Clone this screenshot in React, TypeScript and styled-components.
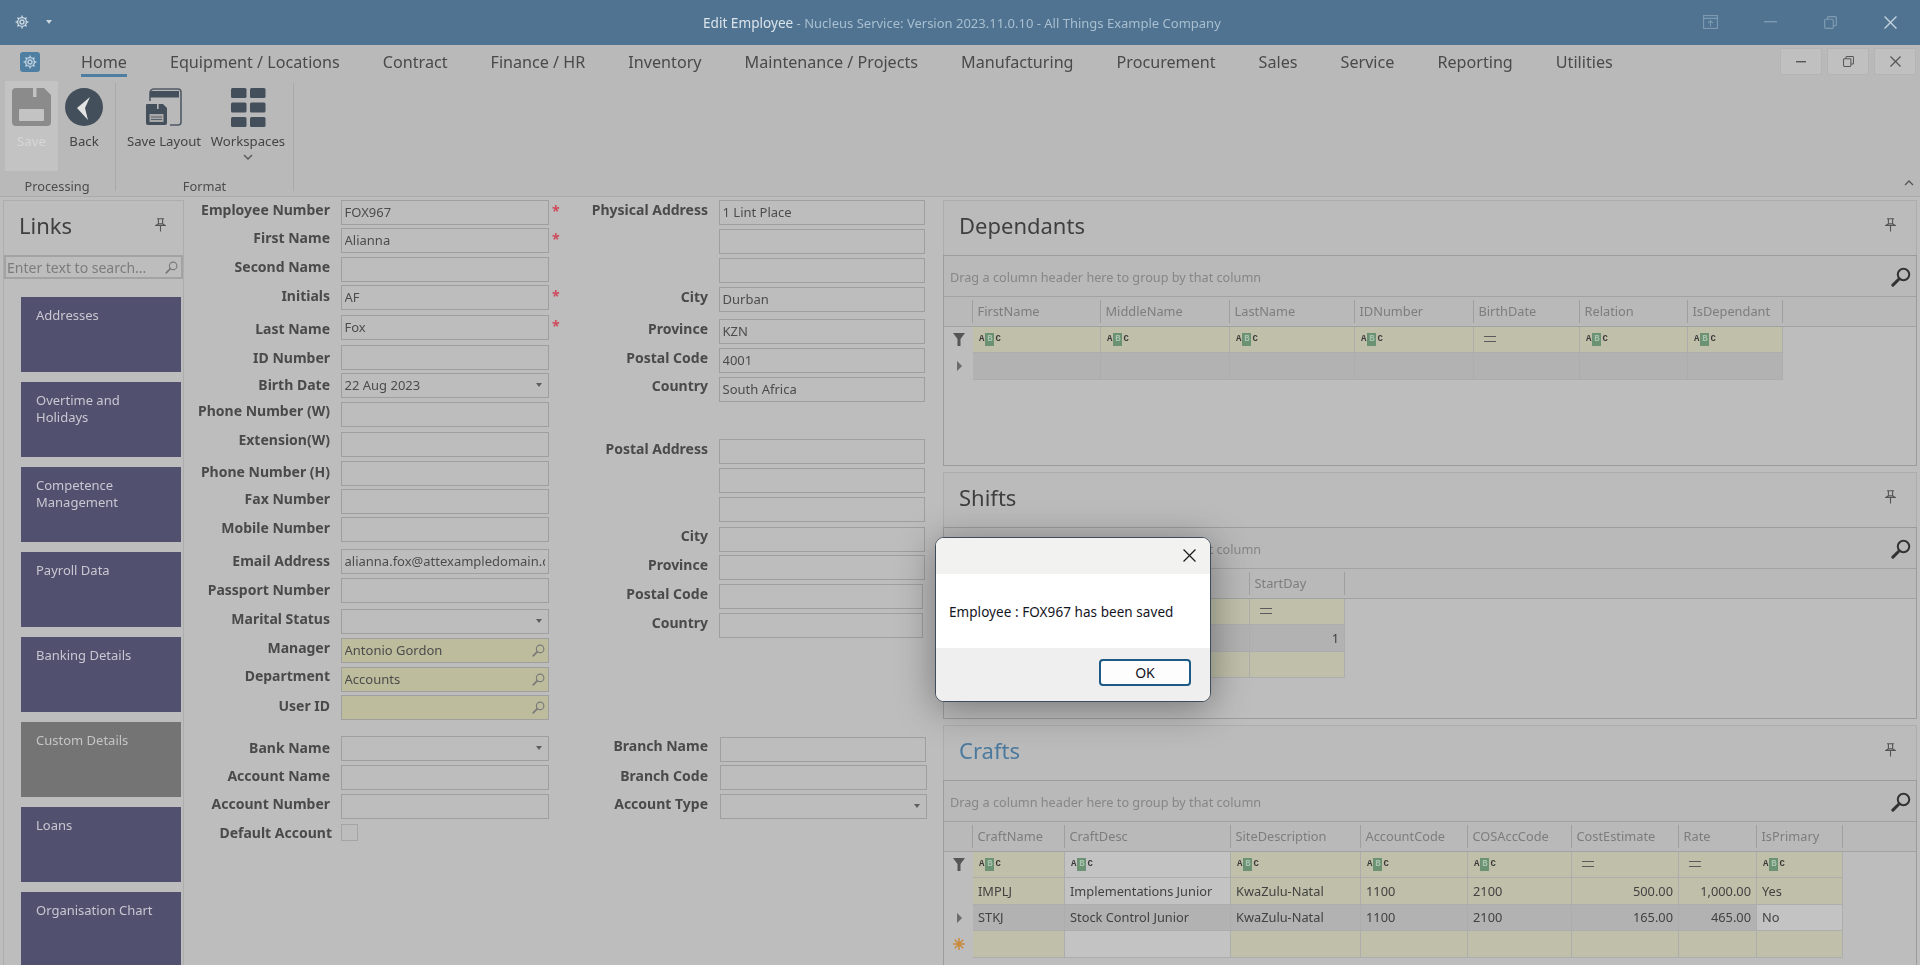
import React from "react";
import styled, { createGlobalStyle } from "styled-components";

const UI = `"Noto Sans", "Open Sans", "Liberation Sans", sans-serif`;

const Global = createGlobalStyle`
  html, body { margin: 0; padding: 0; background: #bdbdbd; overflow: hidden; }
  body { font-family: ${UI}; }
  * { box-sizing: border-box; }
`;

const Page = styled.div`
  position: relative;
  width: 1920px;
  height: 965px;
  overflow: hidden;
`;
const Dimmed = styled.div`
  width: 1920px;
  height: 965px;
  display: flex;
  flex-direction: column;
  background: #bdbdbd;
  filter: blur(0.55px);
`;

/* ---------- title bar ---------- */
const TitleBar = styled.header`
  height: 45px;
  flex: none;
  background: #4f7391;
  display: flex;
  align-items: center;
  padding-bottom: 1px;
  color: #a9bfd0;
  font-size: 13px;
`;
const QuickAccess = styled.div`
  display: flex;
  align-items: center;
  gap: 17px;
  padding-left: 15px;
  width: 660px;
`;
const Caret = styled.span<{ $c?: string }>`
  display: inline-block;
  width: 0;
  height: 0;
  border-left: 3.5px solid transparent;
  border-right: 3.5px solid transparent;
  border-top: 4px solid ${(p) => p.$c || "#c9d6e0"};
`;
const FieldCaret = styled(Caret)`
  margin-right: 3px;
`;
const Title = styled.div`
  flex: 1;
  margin-left: 43px;
  white-space: nowrap;
`;
const TitleStrong = styled.span`
  color: #dbe4eb;
  font-size: 13.6px;
`;
const WinButtons = styled.div`
  display: flex;
`;
const WinButton = styled.div`
  width: 60px;
  height: 44px;
  display: flex;
  align-items: center;
  justify-content: center;
  color: #7f9bb1;
`;

/* ---------- tab strip ---------- */
const TabStrip = styled.nav`
  height: 36px;
  flex: none;
  background: #b9b9b9;
  display: flex;
  align-items: flex-start;
`;
const AppIcon = styled.div`
  width: 20px;
  height: 20px;
  margin: 7px 19.5px 0 20px;
  border-radius: 3px;
  background: #4f7ea3;
  display: flex;
  align-items: center;
  justify-content: center;
`;
const Tab = styled.div<{ $active?: boolean }>`
  margin: 0 21.5px;
  height: 32px;
  padding-top: 5px;
  font-size: 16.15px;
  line-height: 24px;
  color: #4a4a4a;
  white-space: nowrap;
  border-bottom: 3px solid ${(p) => (p.$active ? "#4f7ea3" : "transparent")};
`;
const MdiButtons = styled.div`
  margin-left: auto;
  margin-right: 4px;
  margin-top: 3px;
  display: flex;
  gap: 5px;
`;
const MdiButton = styled.div`
  width: 42px;
  height: 27px;
  background: #c0c0c0;
  border: 1px solid #b4b4b4;
  display: flex;
  align-items: center;
  justify-content: center;
  color: #555;
`;

/* ---------- ribbon ---------- */
const Ribbon = styled.section`
  height: 116px;
  flex: none;
  background: #b9b9b9;
  border-bottom: 1px solid #ababab;
  display: flex;
  padding-left: 5px;
`;
const RibbonGroup = styled.div<{ $w: number }>`
  width: ${(p) => p.$w}px;
  display: flex;
  flex-direction: column;
`;
const RibbonButtons = styled.div`
  height: 90px;
  display: flex;
`;
const RibbonButton = styled.div<{ $w: number; $active?: boolean; $ml?: number }>`
  width: ${(p) => p.$w}px;
  margin-left: ${(p) => p.$ml || 0}px;
  height: 90px;
  padding-top: 7px;
  background: ${(p) => (p.$active ? "#c3c3c3" : "transparent")};
  display: flex;
  flex-direction: column;
  align-items: center;
`;
const RibbonIcon = styled.div`
  height: 38px;
  display: flex;
  align-items: center;
  justify-content: center;
`;
const RibbonLabel = styled.div<{ $muted?: boolean }>`
  margin-top: 5px;
  font-size: 13.2px;
  line-height: 20px;
  white-space: nowrap;
  color: ${(p) => (p.$muted ? "#d6d6d6" : "#444")};
`;
const Chevron = styled.div`
  line-height: 0;
  margin-top: 3px;
`;
const GroupLabel = styled.div<{ $pr?: number }>`
  margin-top: 5px;
  padding-right: ${(p) => p.$pr || 0}px;
  text-align: center;
  font-size: 12.8px;
  line-height: 20px;
  color: #4c4c4c;
`;
const RibbonSep = styled.div`
  width: 1px;
  margin: 2px 0 5px;
  background: #a9a9a9;
`;
const Collapse = styled.div`
  margin-left: auto;
  margin-right: 6px;
  align-self: flex-end;
  margin-bottom: 10px;
  line-height: 0;
`;

/* ---------- body ---------- */
const Body = styled.main`
  flex: 1;
  min-height: 0;
  padding: 3px 3px 0;
  display: flex;
  overflow: hidden;
`;
const LinksPanel = styled.aside`
  width: 181px;
  flex: none;
  height: 780px;
  border: 1px solid #adadad;
  border-bottom: 0;
  background: #bdbdbd;
`;
const PanelHead = styled.div`
  height: 54px;
  padding: 0 17px 6px 15px;
  display: flex;
  align-items: center;
  justify-content: space-between;
`;
const PanelTitle = styled.h2<{ $blue?: boolean }>`
  margin: 0;
  font-size: 22px;
  font-weight: 400;
  color: ${(p) => (p.$blue ? "#4b7a9e" : "#3f3f3f")};
`;
const LinkSearch = styled.div`
  height: 24px;
  margin: 0 0 18px 0;
  width: 179px;
  border: 2px solid #a3a3a3;
  display: flex;
  align-items: center;
  justify-content: space-between;
  padding: 0 3px 0 1px;
  color: #7c7c7c;
  font-size: 14px;
  white-space: nowrap;
  overflow: hidden;
`;
const Tiles = styled.div`
  display: flex;
  flex-direction: column;
  gap: 10px;
  padding-left: 17px;
`;
const Tile = styled.div<{ $grey?: boolean }>`
  width: 160px;
  height: 75px;
  flex: none;
  padding: 10px 14px 0 15px;
  background: ${(p) => (p.$grey ? "#747474" : "#52506f")};
  color: ${(p) => (p.$grey ? "#c5c5c5" : "#c8c8d2")};
  font-size: 13px;
  line-height: 17px;
`;

/* ---------- form ---------- */
const FormArea = styled.section`
  width: 759px;
  flex: none;
  display: flex;
`;
const FormColumn = styled.div<{ $w: number }>`
  width: ${(p) => p.$w}px;
  display: flex;
  flex-direction: column;
`;
const Row = styled.div<{ $mt: number }>`
  display: flex;
  align-items: flex-start;
  margin-top: ${(p) => p.$mt}px;
  height: 24px;
`;
const Label = styled.label<{ $w: number; $dy: number; $dx?: number }>`
  width: ${(p) => p.$w + (p.$dx || 0)}px;
  margin-right: ${(p) => 11 - (p.$dx || 0)}px;
  margin-top: ${(p) => p.$dy}px;
  flex: none;
  text-align: right;
  font-size: 14px;
  font-weight: 700;
  line-height: 20px;
  color: #4a4a4a;
  white-space: nowrap;
`;
const Field = styled.div<{ $w: number; $yellow?: boolean; $x?: number }>`
  width: ${(p) => p.$w}px;
  margin-left: ${(p) => p.$x || 0}px;
  height: 24.5px;
  flex: none;
  border: 1.5px solid #9f9f9f;
  background: ${(p) => (p.$yellow ? "#bdbc9c" : "#bdbdbd")};
  color: #4c4c4c;
  font-size: 13px;
  line-height: 21px;
  padding: 0 3px 0 2.5px;
  display: flex;
  align-items: center;
  justify-content: space-between;
  overflow: hidden;
  white-space: nowrap;
`;
const FieldText = styled.span`
  overflow: hidden;
`;
const Star = styled.span`
  margin-left: 3px;
  margin-top: 1px;
  color: #cf4a5b;
  font-size: 14px;
  font-weight: 700;
  line-height: 20px;
`;
const Check = styled.div`
  width: 17px;
  height: 17px;
  border: 1px solid #a5a5a5;
`;

/* ---------- right panels ---------- */
const RightColumn = styled.section`
  width: 974px;
  flex: none;
  display: flex;
  flex-direction: column;
  gap: 6px;
`;
const Panel = styled.div<{ $h: number }>`
  height: ${(p) => p.$h}px;
  flex: none;
  border: 1px solid #adadad;
  border-bottom: 0;
  background: #bbb;
  display: flex;
  flex-direction: column;
`;
const PanelHeadWide = styled(PanelHead)`
  padding: 0 20px 6px 15px;
`;
const Grid = styled.div`
  flex: 1;
  min-height: 0;
  margin: 0 -1px;
  border: 1.5px solid #9c9c9c;
  background: #bdbdbd;
  overflow: hidden;
`;
const GroupBar = styled.div`
  height: 40.5px;
  border-bottom: 1.5px solid #a2a2a2;
  padding: 2px 5px 0 6px;
  display: flex;
  align-items: center;
  justify-content: space-between;
  background: #b9b9b9;
  font-size: 12.7px;
  color: #868686;
  white-space: nowrap;
`;
const HeaderRow = styled.div`
  height: 30px;
  display: flex;
  align-items: center;
  padding-top: 1px;
  border-bottom: 1.5px solid #a2a2a2;
  background: #b9b9b9;
`;
const HeaderCell = styled.div<{ $w: number }>`
  width: ${(p) => p.$w}px;
  height: 23px;
  flex: none;
  padding-left: 4.5px;
  border-right: 1px solid #9f9f9f;
  font-size: 12.8px;
  line-height: 23px;
  color: #7d7d7d;
  white-space: nowrap;
  overflow: hidden;
`;
const DataRow = styled.div`
  height: 26.5px;
  display: flex;
`;
const Indicator = styled.div`
  width: 29px;
  flex: none;
  display: flex;
  align-items: center;
  justify-content: center;
`;
const Cell = styled.div<{ $w: number; $bg: string; $right?: boolean }>`
  width: ${(p) => p.$w}px;
  flex: none;
  background: ${(p) => p.$bg};
  border-right: 1px solid #adadad;
  border-bottom: 1px solid #adadad;
  padding: 0 5px;
  display: flex;
  align-items: center;
  justify-content: ${(p) => (p.$right ? "flex-end" : "flex-start")};
  font-size: 12.8px;
  color: #424242;
  white-space: nowrap;
  overflow: hidden;
`;
const Abc = styled.span`
  display: inline-flex;
  align-items: center;
  height: 13px;
  font-family: "Liberation Mono", monospace;
  font-size: 9px;
  font-weight: 700;
  color: #3a3a3a;
  margin-left: 1px;
`;
const AbcBox = styled.span`
  width: 9px;
  height: 13px;
  margin: 0 1px;
  background: #6c9274;
  color: #a9c4ae;
  display: flex;
  align-items: center;
  justify-content: center;
`;
const Eq = styled.span`
  width: 12px;
  height: 6px;
  margin-left: 5px;
  border-top: 1.5px solid #5a5a5a;
  border-bottom: 1.5px solid #5a5a5a;
`;

/* ---------- dialog ---------- */
const Dialog = styled.div`
  position: absolute;
  left: 935px;
  top: 537px;
  width: 276px;
  height: 165px;
  display: flex;
  flex-direction: column;
  border: 1.5px solid #3f4d5b;
  border-radius: 9px;
  overflow: hidden;
  background: #fff;
  box-shadow: 0 6px 38px rgba(0, 0, 0, 0.38);
`;
const DialogHead = styled.div`
  height: 36px;
  flex: none;
  background: #f2f2f0;
  display: flex;
  align-items: center;
  justify-content: flex-end;
  padding: 0 14px 2px 0;
`;
const DialogBody = styled.div`
  height: 74px;
  flex: none;
  display: flex;
  align-items: center;
  padding: 2px 0 0 13px;
  font-size: 13.5px;
  letter-spacing: 0.06px;
  color: #14141e;
  background: #fff;
  white-space: nowrap;
`;
const DialogFoot = styled.div`
  flex: 1;
  background: #efefef;
  display: flex;
  justify-content: flex-end;
  padding: 11px 19px 0 0;
`;
const OkButton = styled.div`
  width: 92px;
  height: 27px;
  border: 2px solid #1d5a85;
  border-radius: 4px;
  background: #fdfdfd;
  color: #14141e;
  font-size: 14px;
  line-height: 24px;
  text-align: center;
`;

/* ---------- icons ---------- */
const Gear = ({ s = 14, c = "#c9d6e0" }: { s?: number; c?: string }) => (
  <svg width={s} height={s} viewBox="0 0 24 24" fill="none" stroke={c} strokeWidth="2.4">
    <circle cx="12" cy="12" r="3.4" />
    <circle cx="12" cy="12" r="7.5" />
    <path d="M12 1v3.5M12 19.5V23M1 12h3.5M19.5 12H23M4.2 4.2l2.5 2.5M17.3 17.3l2.5 2.5M4.2 19.8l2.5-2.5M17.3 6.7l2.5-2.5" />
  </svg>
);
const Pin = () => (
  <svg width="11" height="14" viewBox="0 0 11 14" fill="none" stroke="#555" strokeWidth="1.1">
    <path d="M2 .8h7M3.4 .8v5.4M7.6 .8v5.4M.8 7.4h9.4L7.6 5.8H3.4zM5.5 7.6V13.6" />
  </svg>
);
const Magnifier = ({ s = 14, c = "#7a7a7a", w = 1.4 }: { s?: number; c?: string; w?: number }) => (
  <svg width={s} height={s} viewBox="0 0 16 16" fill="none" stroke={c} strokeWidth={w}>
    <circle cx="10" cy="6" r="4.6" />
    <path d="M6.6 9.4L1.5 14.5" strokeWidth={w * 1.5} strokeLinecap="round" />
  </svg>
);
const SaveIcon = () => (
  <svg width="39" height="38" viewBox="0 0 39 38">
    <path d="M4 0h28l7 7v27a4 4 0 0 1-4 4H4a4 4 0 0 1-4-4V4a4 4 0 0 1 4-4z" fill="#8b8b8b" />
    <rect x="21" y="0" width="3.5" height="9" fill="#c3c3c3" />
    <rect x="7" y="21" width="25" height="12" rx="1" fill="#c3c3c3" />
  </svg>
);
const BackIcon = () => (
  <svg width="38" height="38" viewBox="0 0 38 38">
    <circle cx="19" cy="19" r="19" fill="#444f5c" />
    <path d="M25 9L12 20l11 12-3-12z" fill="#e4e4e4" />
  </svg>
);
const SaveLayoutIcon = () => (
  <svg width="36" height="38" viewBox="0 0 36 38">
    <path d="M4 13V5a4 4 0 0 1 4-4h24a3 3 0 0 1 3 3v30a3 3 0 0 1-3 3h-8" fill="none" stroke="#505a66" strokeWidth="1.6" />
    <rect x="4" y="3" width="29" height="6.5" fill="#444f5c" />
    <path d="M1 16h16l4 4v15a2 2 0 0 1-2 2H2a2 2 0 0 1-2-2V17a1 1 0 0 1 1-1z" fill="#444f5c" />
    <rect x="11" y="16" width="1.6" height="5" fill="#b9b9b9" />
    <rect x="3.5" y="26" width="14" height="8" fill="#a8a8a8" />
    <path d="M5 29h11M5 31.5h11" stroke="#444f5c" strokeWidth="0.8" />
  </svg>
);
const WorkspacesIcon = () => (
  <svg width="35" height="39" viewBox="0 0 35 39" fill="#444f5c">
    {[0, 14.5, 29].map((y) =>
      [0, 19].map((x) => <rect key={`${x}-${y}`} x={x} y={y} width="15.5" height="10" rx="1.5" />)
    )}
  </svg>
);
const Chev = ({ up, c = "#555" }: { up?: boolean; c?: string }) => (
  <svg width="10" height="6" viewBox="0 0 10 6" fill="none" stroke={c} strokeWidth="1.3">
    <path d={up ? "M1 5l4-4 4 4" : "M1 1l4 4 4-4"} />
  </svg>
);
const CloseGlyph = ({ s = 12, c = "currentColor", w = 1.3 }: { s?: number; c?: string; w?: number }) => (
  <svg width={s} height={s} viewBox="0 0 12 12" fill="none" stroke={c} strokeWidth={w}>
    <path d="M.5 .5l11 11M11.5 .5l-11 11" />
  </svg>
);
const Restore = ({ s = 12 }: { s?: number }) => (
  <svg width={s} height={s} viewBox="0 0 12 12" fill="none" stroke="currentColor" strokeWidth="1.1">
    <rect x=".6" y="3" width="8" height="8.4" rx="1" />
    <path d="M3.2 3V1.6a1 1 0 0 1 1-1h6.2a1 1 0 0 1 1 1v6.2a1 1 0 0 1-1 1H8.6" />
  </svg>
);
const PopOut = () => (
  <svg width="15" height="14" viewBox="0 0 15 14" fill="none" stroke="currentColor" strokeWidth="1.1">
    <rect x=".6" y=".6" width="13.8" height="12.8" />
    <path d="M.6 3.4h13.8M7.5 11.5V6M5 8.2l2.5-2.5L10 8.2" />
  </svg>
);
const Dash = ({ w = 13 }: { w?: number }) => (
  <svg width={w} height="2" viewBox={`0 0 ${w} 2`}>
    <rect width={w} height="1.4" fill="currentColor" />
  </svg>
);
const FunnelIcon = () => (
  <svg width="12" height="13" viewBox="0 0 12 13" fill="#565656">
    <path d="M0 0h12L7.5 6v7H4.5V6z" />
  </svg>
);
const RowArrow = () => (
  <svg width="6" height="10" viewBox="0 0 6 10" fill="#6a6a6a">
    <path d="M1 0l5 5-5 5z" />
  </svg>
);
const NewRow = () => (
  <svg width="12" height="12" viewBox="0 0 12 12" stroke="#c98a3c" strokeWidth="1.5">
    <path d="M6 0v12M0 6h12M1.8 1.8l8.4 8.4M10.2 1.8l-8.4 8.4" />
  </svg>
);

/* ---------- data ---------- */
type F = {
  l?: string;
  v?: string;
  top: number;
  c?: number;
  kind?: "drop" | "look";
  star?: boolean;
  check?: boolean;
  w?: number;
  x?: number;
};
const col1: F[] = [
  { l: "Employee Number", v: "FOX967", top: 200, c: 210, star: true },
  { l: "First Name", v: "Alianna", top: 228, c: 238, star: true },
  { l: "Second Name", top: 257, c: 267 },
  { l: "Initials", v: "AF", top: 285, c: 296, star: true },
  { l: "Last Name", v: "Fox", top: 315, c: 329, star: true },
  { l: "ID Number", top: 345, c: 358 },
  { l: "Birth Date", v: "22 Aug 2023", top: 373, c: 385, kind: "drop" },
  { l: "Phone Number (W)", top: 402, c: 411 },
  { l: "Extension(W)", top: 432, c: 440 },
  { l: "Phone Number (H)", top: 461, c: 472 },
  { l: "Fax Number", top: 489, c: 499 },
  { l: "Mobile Number", top: 517, c: 528 },
  { l: "Email Address", v: "alianna.fox@attexampledomain.com", top: 549, c: 561 },
  { l: "Passport Number", top: 578, c: 590 },
  { l: "Marital Status", top: 609, c: 619, kind: "drop" },
  { l: "Manager", v: "Antonio Gordon", top: 638, c: 648, kind: "look" },
  { l: "Department", v: "Accounts", top: 667, c: 676, kind: "look" },
  { l: "User ID", top: 695, c: 706, kind: "look" },
  { l: "Bank Name", top: 736, c: 748, kind: "drop" },
  { l: "Account Name", top: 765, c: 776 },
  { l: "Account Number", top: 794, c: 804 },
  { l: "Default Account", top: 824, c: 833, check: true },
];
const col2: F[] = [
  { l: "Physical Address", v: "1 Lint Place", top: 200, c: 210 },
  { top: 229 },
  { top: 258 },
  { l: "City", v: "Durban", top: 287, c: 297 },
  { l: "Province", v: "KZN", top: 319, c: 329 },
  { l: "Postal Code", v: "4001", top: 348, c: 358 },
  { l: "Country", v: "South Africa", top: 377, c: 386 },
  { l: "Postal Address", top: 439, c: 449 },
  { top: 468 },
  { top: 497 },
  { l: "City", top: 527, c: 536 },
  { l: "Province", top: 555, c: 565 },
  { l: "Postal Code", top: 584, c: 594, w: 204 },
  { l: "Country", top: 613, c: 623, w: 204 },
  { l: "Branch Name", top: 737, c: 746, x: 1, w: 206 },
  { l: "Branch Code", top: 765, c: 776, x: 1, w: 207 },
  { l: "Account Type", top: 794, c: 804, x: 1, w: 207, kind: "drop" },
];
const tiles = [
  "Addresses",
  "Overtime and Holidays",
  "Competence Management",
  "Payroll Data",
  "Banking Details",
  "Custom Details",
  "Loans",
  "Organisation Chart",
];
const tabs = [
  "Home",
  "Equipment / Locations",
  "Contract",
  "Finance / HR",
  "Inventory",
  "Maintenance / Projects",
  "Manufacturing",
  "Procurement",
  "Sales",
  "Service",
  "Reporting",
  "Utilities",
];

const YEL = "#bfbfaa";
const SEL = "#b2b2b2";
const PLAIN = "#c3c3c3";

const FormCol = ({ rows, labelW, width, inputW }: { rows: F[]; labelW: number; width: number; inputW: number }) => {
  let prev = 200;
  return (
    <FormColumn $w={width}>
      {rows.map((r, i) => {
        const mt = i === 0 ? 0 : r.top - prev;
        prev = r.top + 24;
        const yellow = r.kind === "look";
        return (
          <Row key={i} $mt={mt}>
            <Label $w={labelW} $dy={r.c ? r.c - 10 - r.top : 0} $dx={r.check ? 2 : 0}>
              {r.l}
            </Label>
            {r.check ? (
              <Check />
            ) : (
              <Field $w={r.w || inputW} $x={r.x} $yellow={yellow}>
                {r.v ? <FieldText>{r.v}</FieldText> : <span />}
                {r.kind === "drop" && <FieldCaret $c="#5e5e5e" />}
                {r.kind === "look" && <Magnifier s={13} />}
              </Field>
            )}
            {r.star && <Star>*</Star>}
          </Row>
        );
      })}
    </FormColumn>
  );
};

type Col = { n: string; w: number; eq?: boolean; plain?: boolean };
const FilterCells = ({ cols }: { cols: Col[] }) => (
  <DataRow>
    <Indicator>
      <FunnelIcon />
    </Indicator>
    {cols.map((c) => (
      <Cell key={c.n} $w={c.w} $bg={c.plain ? PLAIN : YEL}>
        {c.eq ? (
          <Eq />
        ) : (
          <Abc>
            A<AbcBox>B</AbcBox>C
          </Abc>
        )}
      </Cell>
    ))}
  </DataRow>
);
const Headers = ({ cols }: { cols: Col[] }) => (
  <HeaderRow>
    <HeaderCell $w={29} />
    {cols.map((c) => (
      <HeaderCell key={c.n} $w={c.w}>
        {c.n.trim()}
      </HeaderCell>
    ))}
  </HeaderRow>
);
const GroupHint = () => (
  <GroupBar>
    Drag a column header here to group by that column
    <Magnifier s={20} c="#333" w={1.6} />
  </GroupBar>
);

const depCols: Col[] = [
  { n: "FirstName", w: 128 },
  { n: "MiddleName", w: 129 },
  { n: "LastName", w: 125 },
  { n: "IDNumber", w: 119 },
  { n: "BirthDate", w: 106, eq: true },
  { n: "Relation", w: 108 },
  { n: "IsDependant", w: 95 },
];
const shiftCols: Col[] = [
  { n: " ", w: 277 },
  { n: "StartDay", w: 95, eq: true },
];
const craftCols: Col[] = [
  { n: "CraftName", w: 92 },
  { n: "CraftDesc", w: 166, plain: true },
  { n: "SiteDescription", w: 130 },
  { n: "AccountCode", w: 107 },
  { n: "COSAccCode", w: 104 },
  { n: "CostEstimate", w: 107, eq: true },
  { n: "Rate", w: 78, eq: true },
  { n: "IsPrimary", w: 86 },
];

export default function App() {
  return (
    <Page>
      <Global />
      <Dimmed>
        <TitleBar>
          <QuickAccess>
            <Gear />
            <Caret />
          </QuickAccess>
          <Title>
            <TitleStrong>Edit Employee</TitleStrong> - Nucleus Service: Version 2023.11.0.10 - All Things Example Company
          </Title>
          <WinButtons>
            <WinButton>
              <PopOut />
            </WinButton>
            <WinButton>
              <Dash />
            </WinButton>
            <WinButton>
              <Restore s={13} />
            </WinButton>
            <WinButton>
              <CloseGlyph s={13} c="#c3d1dc" />
            </WinButton>
          </WinButtons>
        </TitleBar>

        <TabStrip>
          <AppIcon>
            <Gear s={14} c="#bcd0df" />
          </AppIcon>
          {tabs.map((t, i) => (
            <Tab key={t} $active={i === 0}>
              {t}
            </Tab>
          ))}
          <MdiButtons>
            <MdiButton>
              <Dash w={10} />
            </MdiButton>
            <MdiButton>
              <Restore s={11} />
            </MdiButton>
            <MdiButton>
              <CloseGlyph s={11} />
            </MdiButton>
          </MdiButtons>
        </TabStrip>

        <Ribbon>
          <RibbonGroup $w={110}>
            <RibbonButtons>
              <RibbonButton $w={53} $active>
                <RibbonIcon>
                  <SaveIcon />
                </RibbonIcon>
                <RibbonLabel $muted>Save</RibbonLabel>
              </RibbonButton>
              <RibbonButton $w={48} $ml={2}>
                <RibbonIcon>
                  <BackIcon />
                </RibbonIcon>
                <RibbonLabel>Back</RibbonLabel>
              </RibbonButton>
            </RibbonButtons>
            <GroupLabel $pr={6}>Processing</GroupLabel>
          </RibbonGroup>
          <RibbonSep />
          <RibbonGroup $w={177}>
            <RibbonButtons>
              <RibbonButton $w={76} $ml={10}>
                <RibbonIcon>
                  <SaveLayoutIcon />
                </RibbonIcon>
                <RibbonLabel>Save Layout</RibbonLabel>
              </RibbonButton>
              <RibbonButton $w={76} $ml={8}>
                <RibbonIcon>
                  <WorkspacesIcon />
                </RibbonIcon>
                <RibbonLabel>Workspaces</RibbonLabel>
                <Chevron>
                  <Chev />
                </Chevron>
              </RibbonButton>
            </RibbonButtons>
            <GroupLabel>Format</GroupLabel>
          </RibbonGroup>
          <RibbonSep />
          <Collapse>
            <Chev up />
          </Collapse>
        </Ribbon>

        <Body>
          <LinksPanel>
            <PanelHead>
              <PanelTitle>Links</PanelTitle>
              <Pin />
            </PanelHead>
            <LinkSearch>
              Enter text to search...
              <Magnifier s={13} />
            </LinkSearch>
            <Tiles>
              {tiles.map((t) => (
                <Tile key={t} $grey={t === "Custom Details"}>
                  {t}
                </Tile>
              ))}
            </Tiles>
          </LinksPanel>

          <FormArea>
            <FormCol rows={col1} labelW={146} width={377} inputW={208} />
            <FormCol rows={col2} labelW={147} width={382} inputW={206} />
          </FormArea>

          <RightColumn>
            <Panel $h={266}>
              <PanelHeadWide>
                <PanelTitle>Dependants</PanelTitle>
                <Pin />
              </PanelHeadWide>
              <Grid>
                <GroupHint />
                <Headers cols={depCols} />
                <FilterCells cols={depCols} />
                <DataRow>
                  <Indicator>
                    <RowArrow />
                  </Indicator>
                  {depCols.map((c) => (
                    <Cell key={c.n} $w={c.w} $bg={SEL} />
                  ))}
                </DataRow>
              </Grid>
            </Panel>

            <Panel $h={247}>
              <PanelHeadWide>
                <PanelTitle>Shifts</PanelTitle>
                <Pin />
              </PanelHeadWide>
              <Grid>
                <GroupHint />
                <Headers cols={shiftCols} />
                <FilterCells cols={shiftCols} />
                <DataRow>
                  <Indicator>
                    <RowArrow />
                  </Indicator>
                  <Cell $w={277} $bg={SEL} />
                  <Cell $w={95} $bg={SEL} $right>
                    1
                  </Cell>
                </DataRow>
                <DataRow>
                  <Indicator>
                    <NewRow />
                  </Indicator>
                  <Cell $w={277} $bg={YEL} />
                  <Cell $w={95} $bg={YEL} />
                </DataRow>
              </Grid>
            </Panel>

            <Panel $h={250}>
              <PanelHeadWide>
                <PanelTitle $blue>Crafts</PanelTitle>
                <Pin />
              </PanelHeadWide>
              <Grid>
                <GroupHint />
                <Headers cols={craftCols} />
                <FilterCells cols={craftCols} />
                {[
                  ["IMPLJ", "Implementations Junior", "KwaZulu-Natal", "1100", "2100", "500.00", "1,000.00", "Yes"],
                  ["STKJ", "Stock Control Junior", "KwaZulu-Natal", "1100", "2100", "165.00", "465.00", "No"],
                ].map((row, ri) => (
                  <DataRow key={row[0]}>
                    <Indicator>{ri === 1 && <RowArrow />}</Indicator>
                    {row.map((v, i) => {
                      const bg =
                        ri === 1 ? (i === 7 ? PLAIN : SEL) : craftCols[i].plain ? PLAIN : YEL;
                      return (
                        <Cell key={i} $w={craftCols[i].w} $bg={bg} $right={i === 5 || i === 6}>
                          {v}
                        </Cell>
                      );
                    })}
                  </DataRow>
                ))}
                <DataRow>
                  <Indicator>
                    <NewRow />
                  </Indicator>
                  {craftCols.map((c) => (
                    <Cell key={c.n} $w={c.w} $bg={c.plain ? PLAIN : YEL} />
                  ))}
                </DataRow>
              </Grid>
            </Panel>
          </RightColumn>
        </Body>
      </Dimmed>

      <Dialog>
        <DialogHead>
          <CloseGlyph s={13} c="#1a1a1a" w={1.1} />
        </DialogHead>
        <DialogBody>Employee : FOX967 has been saved</DialogBody>
        <DialogFoot>
          <OkButton>OK</OkButton>
        </DialogFoot>
      </Dialog>
    </Page>
  );
}
